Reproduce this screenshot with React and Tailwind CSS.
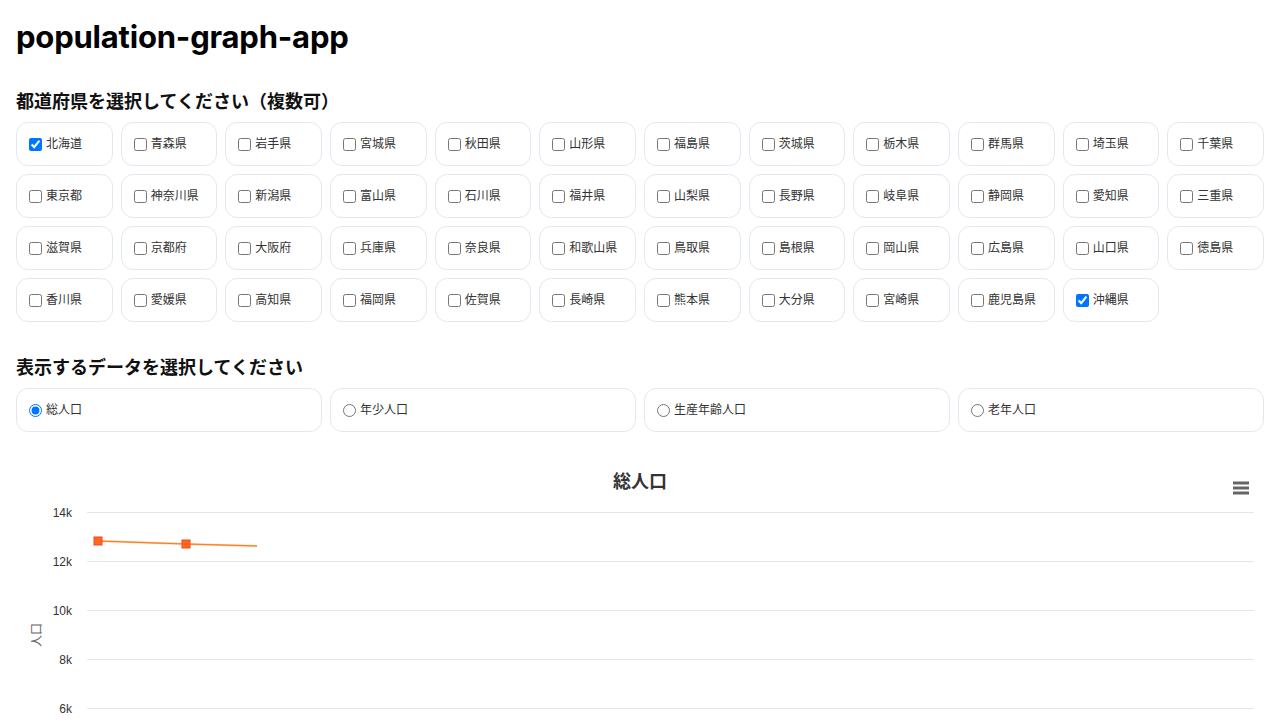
import React from "react";

const PREFS = [
  "北海道","青森県","岩手県","宮城県","秋田県","山形県","福島県","茨城県","栃木県","群馬県","埼玉県","千葉県",
  "東京都","神奈川県","新潟県","富山県","石川県","福井県","山梨県","長野県","岐阜県","静岡県","愛知県","三重県",
  "滋賀県","京都府","大阪府","兵庫県","奈良県","和歌山県","鳥取県","島根県","岡山県","広島県","山口県","徳島県",
  "香川県","愛媛県","高知県","福岡県","佐賀県","長崎県","熊本県","大分県","宮崎県","鹿児島県","沖縄県",
];
const CHECKED = new Set(["北海道", "沖縄県"]);
const TYPES = ["総人口", "年少人口", "生産年齢人口", "老年人口"];

const FONT = { fontFamily: 'Inter, "Noto Sans CJK JP", sans-serif' };

function Chart() {
  const grid = [
    { y: 64, l: "14k" },
    { y: 113, l: "12k" },
    { y: 162, l: "10k" },
    { y: 211, l: "8k" },
    { y: 260, l: "6k" },
  ];
  const pts = [
    [82, 93],
    [170, 96],
  ];
  return (
    <svg width="1248" height="272" viewBox="0 0 1248 272" className="block">
      <text x="624" y="40" textAnchor="middle" fontSize="18" fontWeight="700" fill="#333333" style={{ fontFamily: '"Noto Sans CJK JP", sans-serif' }}>
        総人口
      </text>
      <g stroke="#666666" strokeWidth="3" strokeLinecap="butt">
        <line x1="1217" y1="35" x2="1233" y2="35" />
        <line x1="1217" y1="40" x2="1233" y2="40" />
        <line x1="1217" y1="45" x2="1233" y2="45" />
      </g>
      {grid.map((g) => (
        <g key={g.l}>
          <line x1="71" y1={g.y + 0.5} x2="1238" y2={g.y + 0.5} stroke="#e6e6e6" strokeWidth="1" />
          <text x="56" y={g.y + 4.5} textAnchor="end" fontSize="12" fill="#333333" style={{ fontFamily: '"Liberation Sans", Arial, sans-serif' }}>
            {g.l}
          </text>
        </g>
      ))}
      <text
        x="25"
        y="187"
        textAnchor="middle"
        fontSize="12"
        fill="#666666"
        transform="rotate(270 25 187)"
        style={{ fontFamily: '"Noto Sans CJK JP", sans-serif' }}
      >
        人口
      </text>
      <polyline points="82,93 170,96 241,98" fill="none" stroke="#f7a35c" strokeWidth="2" opacity="0.7" />
      <polyline points="82,93 170,96 241,98" fill="none" stroke="#ff7a1a" strokeWidth="1" />
      {pts.map(([x, y], i) => (
        <rect key={i} x={x - 4} y={y - 4} width="8" height="8" fill="#ff6a1a" stroke="#f0442a" strokeWidth="1" />
      ))}
    </svg>
  );
}

export default function App() {
  return (
    <div className="bg-white text-[#1a1a1a] px-4 pt-[19px]" style={FONT}>
      <h1 className="text-[31px] leading-[36px] font-bold text-black tracking-[-0.2px]">population-graph-app</h1>
      <h2 className="mt-[33px] text-[18px] leading-[27px] font-bold text-[#111]">都道府県を選択してください（複数可）</h2>
      <div className="mt-[7px] grid grid-cols-12 gap-2">
        {PREFS.map((p) => (
          <label
            key={p}
            className="h-[44px] flex items-center gap-[4px] pl-[12px] border border-[#e3e8ef] rounded-xl text-[12px] text-[#333]"
          >
            <input type="checkbox" defaultChecked={CHECKED.has(p)} className="m-0 w-[13px] h-[13px]" />
            <span>{p}</span>
          </label>
        ))}
      </div>
      <h2 className="mt-[32px] text-[18px] leading-[27px] font-bold text-[#111]">表示するデータを選択してください</h2>
      <div className="mt-[7px] grid grid-cols-4 gap-2">
        {TYPES.map((t, i) => (
          <label
            key={t}
            className="h-[44px] flex items-center gap-[4px] pl-[12px] border border-[#e3e8ef] rounded-xl text-[12px] text-[#333]"
          >
            <input type="radio" name="type" defaultChecked={i === 0} className="m-0 w-[13px] h-[13px]" />
            <span>{t}</span>
          </label>
        ))}
      </div>
      <div className="mt-[16px]">
        <Chart />
      </div>
    </div>
  );
}
